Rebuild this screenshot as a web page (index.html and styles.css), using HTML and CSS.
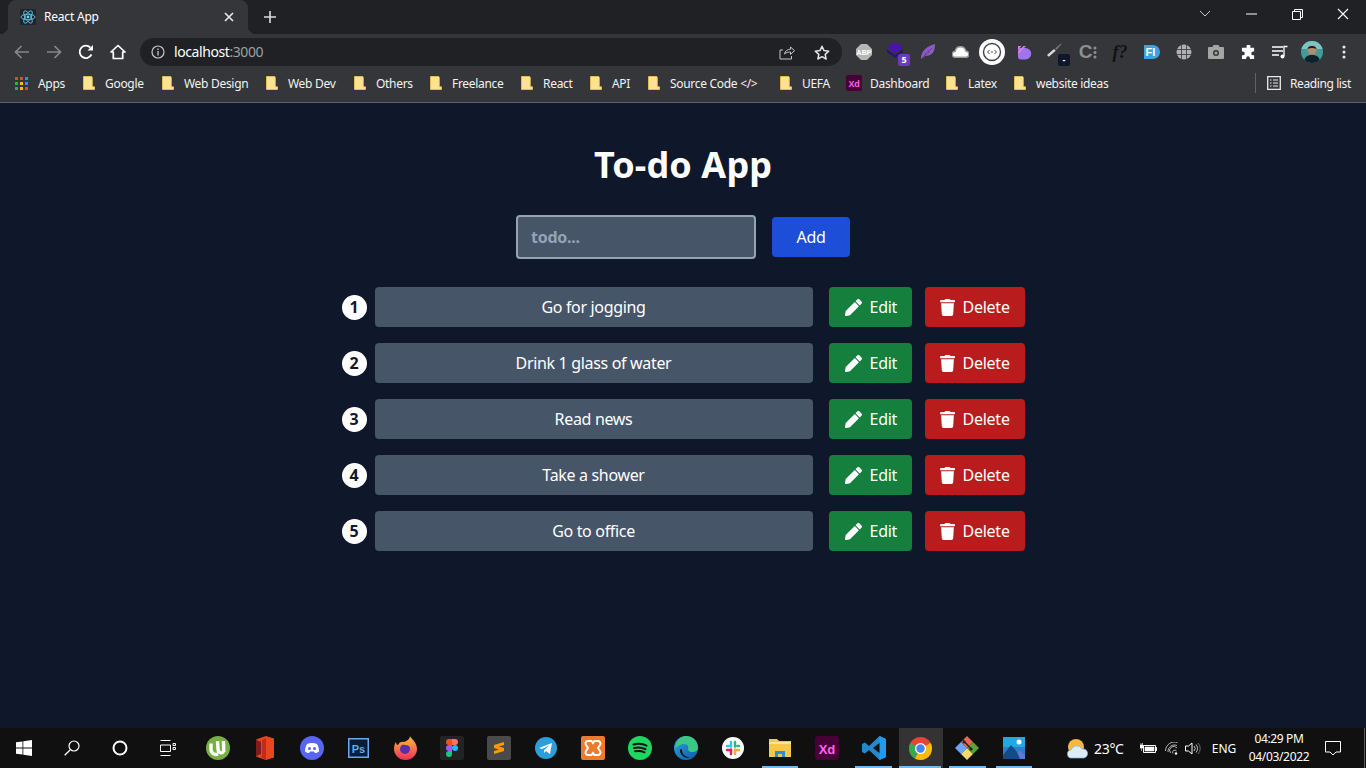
FILE: index.html
```html
<!DOCTYPE html>
<html lang="en">
<head>
<meta charset="utf-8">
<title>React App</title>
<link rel="stylesheet" href="styles.css">
</head>
<body>
<svg class="defs" width="0" height="0" aria-hidden="true">
  <symbol id="folder" viewBox="0 0 12 14"><path d="M.5.5h8.2l.6 1v9.3h2.2v2.7H.5z" fill="#fde293" stroke="#f2c94c" stroke-width=".8"/></symbol>
  <symbol id="pencil" viewBox="0 0 512 512"><path fill="#fff" d="M497.9 142.1l-46.1 46.1c-4.7 4.7-12.3 4.7-17 0l-111-111c-4.7-4.7-4.7-12.3 0-17l46.1-46.1c18.7-18.7 49.1-18.7 67.9 0l60.1 60.1c18.8 18.7 18.8 49.1 0 67.9zM284.2 99.8L21.6 362.4.4 483.9c-2.9 16.4 11.4 30.6 27.8 27.8l121.5-21.3 262.6-262.6c4.7-4.7 4.7-12.3 0-17l-111-111c-4.8-4.7-12.4-4.7-17.1 0z"/></symbol>
  <symbol id="trash" viewBox="0 0 448 512"><path fill="#fff" d="M432 32H312l-9.4-18.7A24 24 0 0 0 281.1 0H166.8a23.72 23.72 0 0 0-21.4 13.3L136 32H16A16 16 0 0 0 0 48v32a16 16 0 0 0 16 16h416a16 16 0 0 0 16-16V48a16 16 0 0 0-16-16zM53.2 467a48 48 0 0 0 47.9 45h245.8a48 48 0 0 0 47.9-45L416 128H32z"/></symbol>
</svg>

<header class="browser">
  <div class="tabstrip">
    <div class="tab">
      <svg class="favicon" width="16" height="16" viewBox="0 0 16 16"><rect width="16" height="16" rx="2" fill="#20232a"/><g fill="none" stroke="#61dafb" stroke-width=".8"><ellipse cx="8" cy="8" rx="7" ry="2.8"/><ellipse cx="8" cy="8" rx="7" ry="2.8" transform="rotate(60 8 8)"/><ellipse cx="8" cy="8" rx="7" ry="2.8" transform="rotate(120 8 8)"/></g><circle cx="8" cy="8" r="1.4" fill="#61dafb"/></svg>
      <span class="tab-title">React App</span>
      <svg class="tab-close" width="10" height="10" viewBox="0 0 10 10"><path d="M1 1l8 8M9 1l-8 8" stroke="#e8eaed" stroke-width="1.6"/></svg>
    </div>
    <svg class="newtab" width="12" height="12" viewBox="0 0 12 12"><path d="M6 0v12M0 6h12" stroke="#dadce0" stroke-width="1.6"/></svg>
    <div class="winctl">
      <span class="winbtn"><svg width="12" height="8" viewBox="0 0 12 8"><path d="M1 1l5 5 5-5" fill="none" stroke="#c4c6c9"/></svg></span>
      <span class="winbtn"><svg width="11" height="2" viewBox="0 0 11 2"><path d="M0 1h11" stroke="#fff"/></svg></span>
      <span class="winbtn"><svg width="11" height="11" viewBox="0 0 11 11"><path d="M.5 2.500h8v8h-8zM2.500 2.500v-2h8v8h-2" fill="none" stroke="#fff"/></svg></span>
      <span class="winbtn"><svg width="12" height="12" viewBox="0 0 12 12"><path d="M1 1l10 10M11 1L1 11" stroke="#fff" stroke-width="1.1"/></svg></span>
    </div>
  </div>

  <div class="toolbar">
    <span class="navbtn"><svg width="16" height="14" viewBox="0 0 16 14"><path d="M15 7H2M7.500 1L1.500 7l6 6" fill="none" stroke="#85878a" stroke-width="1.700"/></svg></span>
    <span class="navbtn"><svg width="16" height="14" viewBox="0 0 16 14"><path d="M1 7h13M8.500 1l6 6-6 6" fill="none" stroke="#85878a" stroke-width="1.700"/></svg></span>
    <span class="navbtn"><svg width="16" height="16" viewBox="0 0 16 16"><path d="M13.500 10.500A6.200 6.200 0 1 1 12.300 3.500" fill="none" stroke="#fff" stroke-width="1.800"/><path d="M9.500 6.500H15V1z" fill="#fff"/></svg></span>
    <span class="navbtn"><svg width="16" height="16" viewBox="0 0 16 16"><path d="M8 1.500L1 8h2.300v6.500h9.400V8H15z" fill="none" stroke="#fff" stroke-width="1.700" stroke-linejoin="round"/></svg></span>

    <div class="omnibox">
      <svg class="info" width="14" height="14" viewBox="0 0 14 14"><circle cx="7" cy="7" r="6" fill="none" stroke="#c4c6c9" stroke-width="1.200"/><path d="M7 6v4.500M7 3.500v1.400" stroke="#c4c6c9" stroke-width="1.300"/></svg>
      <span class="url">localhost<span class="port">:3000</span></span>
      <svg class="share" width="16" height="15" viewBox="0 0 16 15"><path d="M5.500 9c.5-3 3-4.800 6-4.800V2l4 3.700-4 3.700V7c-2.500 0-4.500.5-6 2zM12.500 11v3H1V5h3" fill="none" stroke="#c4c6c9"/></svg>
      <svg class="star" width="16" height="15" viewBox="0 0 16 15"><path d="M8 1.300l2 4.300 4.700.6-3.500 3.200.9 4.600L8 11.700 3.900 14l.9-4.600L1.300 6.200 6 5.600z" fill="none" stroke="#e3e4e6" stroke-width="1.500" stroke-linejoin="round"/></svg>
    </div>

    <div class="extensions">
      <span class="ext"><svg width="16" height="16" viewBox="0 0 16 16"><path d="M5 0h6l5 5v6l-5 5H5l-5-5V5z" fill="#b5b5b5"/><text x="8" y="10.500" class="ext-abp">ABP</text></svg></span>
      <span class="ext ext-badged"><svg class="ext-stack" width="18" height="17" viewBox="0 0 18 17"><path d="M9 0l8 5.500-8 5.500-8-5.500z" fill="#4a12b0"/><path d="M1 7.500L9 13l8-5.500V10l-8 6-8-6z" fill="#2b0f78"/></svg><span class="badge">5</span></span>
      <span class="ext"><svg width="16" height="16" viewBox="0 0 16 16"><path d="M1 15c0-6 3-12 14-15 0 8-3 12-10 12L3 14z" fill="#8e5bc4"/><path d="M1.500 14.500L12 4M5 9l1 2.500M8 6.500l1 2.500" stroke="#5c3490" stroke-width=".8" fill="none"/></svg></span>
      <span class="ext"><svg width="17" height="12" viewBox="0 0 17 12"><path d="M3.500 11.300a3 3 0 0 1-.3-6A5.400 5.400 0 0 1 13.800 5a3.100 3.100 0 0 1-.3 6.300z" fill="#fff" stroke="#9a9a9a" stroke-width="1.400"/></svg></span>
      <span class="ext"><svg width="26" height="26" viewBox="0 0 26 26"><circle cx="13" cy="13" r="13" fill="#fff"/><circle cx="13" cy="13" r="8.500" fill="none" stroke="#444" stroke-width="1.400"/><path d="M10.500 11l-2 2 2 2M15.500 11l2 2-2 2M12 13h2" fill="none" stroke="#444"/></svg></span>
      <span class="ext"><svg width="15" height="15" viewBox="0 0 15 15"><path d="M1 3h7.500a5.700 5.700 0 0 1 0 11.500H4a3 3 0 0 1-3-3z" fill="#a173f0"/><path d="M1 1h3.500L1 4.500zM1 6.500L6.500 1H9L1 9z" fill="#e27be0"/></svg></span>
      <span class="ext ext-badged"><svg class="ext-pen" width="16" height="14" viewBox="0 0 16 14"><path d="M0 12L7 6l1.800 1.800-7 6z" fill="#d8d8d8"/><path d="M8 5.500L14 .5l.6.6-5 5.700z" fill="#777"/></svg><span class="badge badge-dark">-</span></span>
      <span class="ext"><span class="ext-c">C</span><svg class="ext-c-dots" width="4" height="14" viewBox="0 0 4 14"><circle cx="2" cy="3" r="1.500" fill="#8f8f8f"/><circle cx="2" cy="7.500" r="1.500" fill="#8f8f8f"/><circle cx="2" cy="12" r="1.500" fill="#8f8f8f"/></svg></span>
      <span class="ext"><span class="ext-f">f?</span></span>
      <span class="ext"><svg width="16" height="16" viewBox="0 0 16 16"><path d="M0 1h9a7 7 0 0 1 0 14H0z" fill="#3fa2e0"/><text x="6.500" y="12" class="ext-fi">FI</text></svg></span>
      <span class="ext"><svg width="16" height="16" viewBox="0 0 16 16"><circle cx="8" cy="8" r="7.500" fill="#b0b0b0"/><path d="M5.500 .8v14.400M10.500 .8v14.400M.8 5.500h14.400M.8 10.500h14.400" stroke="#35363a" stroke-width=".8"/></svg></span>
      <span class="ext"><svg width="16" height="14" viewBox="0 0 16 14"><path d="M1 2h3.500l1-2h5l1 2H15a1 1 0 0 1 1 1v10a1 1 0 0 1-1 1H1a1 1 0 0 1-1-1V3a1 1 0 0 1 1-1z" fill="#a5a5a5"/><circle cx="8" cy="8" r="3" fill="#35363a"/><circle cx="8" cy="8" r="1.500" fill="#a5a5a5"/></svg></span>
      <span class="ext"><svg width="15" height="15" viewBox="0 0 16 16"><path d="M6 1a2 2 0 0 1 4 0v2h4v4h-1a2 2 0 0 0 0 4h1v4H9.500v-1a2 2 0 0 0-4 0v1H1v-4h1a2 2 0 0 0 0-4H1V3h5z" fill="#fff"/></svg></span>
      <span class="ext"><svg width="16" height="14" viewBox="0 0 16 14"><path d="M0 2h11M0 6h11M0 10h7" stroke="#fff" stroke-width="1.300"/><path d="M12 11V1.500h3.500" fill="none" stroke="#fff" stroke-width="1.300"/><circle cx="10.500" cy="11.500" r="2" fill="#fff"/></svg></span>
      <span class="ext"><svg width="22" height="22" viewBox="0 0 22 22"><defs><clipPath id="avatar"><circle cx="11" cy="11" r="11"/></clipPath></defs><g clip-path="url(#avatar)"><rect width="22" height="22" fill="#3f9c9a"/><rect y="0" width="22" height="8" fill="#7fc2c6"/><circle cx="11" cy="9" r="4.500" fill="#b88a6c"/><path d="M6.500 8c0-4 9-4 9 0-3-1.500-6-1.500-9 0z" fill="#1c1c1c"/><path d="M3 22c0-6 3-8 8-8s8 2 8 8z" fill="#12202a"/></g></svg></span>
      <span class="ext"><svg width="4" height="14" viewBox="0 0 4 14"><circle cx="2" cy="2" r="1.500" fill="#e8eaed"/><circle cx="2" cy="7" r="1.500" fill="#e8eaed"/><circle cx="2" cy="12" r="1.500" fill="#e8eaed"/></svg></span>
    </div>
  </div>

  <nav class="bookmarks">
    <span class="bm"><svg class="bm-icon" width="13" height="13" viewBox="0 0 13 13"><path d="M0 0h3v3H0z" fill="#ea4335"/><path d="M5 0h3v3H5z" fill="#ea4335"/><path d="M10 0h3v3h-3z" fill="#4285f4"/><path d="M0 5h3v3H0z" fill="#34a853"/><path d="M5 5h3v3H5z" fill="#fbbc05"/><path d="M10 5h3v3h-3z" fill="#4285f4"/><path d="M0 10h3v3H0z" fill="#34a853"/><path d="M5 10h3v3H5z" fill="#fbbc05"/><path d="M10 10h3v3h-3z" fill="#ea4335"/></svg>Apps</span>
    <span class="bm"><svg class="bm-icon" width="12" height="14"><use href="#folder"/></svg>Google</span>
    <span class="bm"><svg class="bm-icon" width="12" height="14"><use href="#folder"/></svg>Web Design</span>
    <span class="bm"><svg class="bm-icon" width="12" height="14"><use href="#folder"/></svg>Web Dev</span>
    <span class="bm"><svg class="bm-icon" width="12" height="14"><use href="#folder"/></svg>Others</span>
    <span class="bm"><svg class="bm-icon" width="12" height="14"><use href="#folder"/></svg>Freelance</span>
    <span class="bm"><svg class="bm-icon" width="12" height="14"><use href="#folder"/></svg>React</span>
    <span class="bm"><svg class="bm-icon" width="12" height="14"><use href="#folder"/></svg>API</span>
    <span class="bm"><svg class="bm-icon" width="12" height="14"><use href="#folder"/></svg>Source Code &lt;/&gt;</span>
    <span class="bm"><svg class="bm-icon" width="12" height="14"><use href="#folder"/></svg>UEFA</span>
    <span class="bm bm-xd"><svg class="bm-icon" width="16" height="16" viewBox="0 0 16 16"><rect width="16" height="16" rx="2" fill="#470137"/><text x="8" y="11.500" class="xd-small">Xd</text></svg>Dashboard</span>
    <span class="bm"><svg class="bm-icon" width="12" height="14"><use href="#folder"/></svg>Latex</span>
    <span class="bm"><svg class="bm-icon" width="12" height="14"><use href="#folder"/></svg>website ideas</span>
    <span class="bm-reading"><svg width="14" height="14" viewBox="0 0 14 14"><path d="M.7.7h12.600v12.600H.7z" fill="none" stroke="#e8eaed" stroke-width="1.300"/><path d="M3 4h1.500M6 4h5M3 7h1.500M6 7h5M3 10h1.500M6 10h5" stroke="#e8eaed" stroke-width="1.200"/></svg>Reading list</span>
  </nav>
</header>

<main class="app">
  <h1 class="title">To-do App</h1>
  <form class="todo-form">
    <input class="todo-input" type="text" placeholder="todo...">
    <button class="btn btn-add" type="button">Add</button>
  </form>
  <ol class="todo-list">
    <li class="todo-row">
      <span class="todo-num">1</span>
      <span class="todo-text">Go for jogging</span>
      <button class="btn btn-edit" type="button"><svg width="17" height="17"><use href="#pencil"/></svg>Edit</button>
      <button class="btn btn-delete" type="button"><svg width="15" height="17"><use href="#trash"/></svg>Delete</button>
    </li>
    <li class="todo-row">
      <span class="todo-num">2</span>
      <span class="todo-text">Drink 1 glass of water</span>
      <button class="btn btn-edit" type="button"><svg width="17" height="17"><use href="#pencil"/></svg>Edit</button>
      <button class="btn btn-delete" type="button"><svg width="15" height="17"><use href="#trash"/></svg>Delete</button>
    </li>
    <li class="todo-row">
      <span class="todo-num">3</span>
      <span class="todo-text">Read news</span>
      <button class="btn btn-edit" type="button"><svg width="17" height="17"><use href="#pencil"/></svg>Edit</button>
      <button class="btn btn-delete" type="button"><svg width="15" height="17"><use href="#trash"/></svg>Delete</button>
    </li>
    <li class="todo-row">
      <span class="todo-num">4</span>
      <span class="todo-text">Take a shower</span>
      <button class="btn btn-edit" type="button"><svg width="17" height="17"><use href="#pencil"/></svg>Edit</button>
      <button class="btn btn-delete" type="button"><svg width="15" height="17"><use href="#trash"/></svg>Delete</button>
    </li>
    <li class="todo-row">
      <span class="todo-num">5</span>
      <span class="todo-text">Go to office</span>
      <button class="btn btn-edit" type="button"><svg width="17" height="17"><use href="#pencil"/></svg>Edit</button>
      <button class="btn btn-delete" type="button"><svg width="15" height="17"><use href="#trash"/></svg>Delete</button>
    </li>
  </ol>
</main>

<footer class="taskbar">
  <div class="sys-icons">
    <span class="sys"><svg width="16" height="16" viewBox="0 0 16 16"><path d="M0 2.300l6.500-.9v6.200H0zM7.300 1.300L16 0v7.600H7.300zM0 8.400h6.500v6.200L0 13.700zM7.300 8.400H16V16l-8.700-1.200z" fill="#fff"/></svg></span>
    <span class="sys"><svg width="16" height="16" viewBox="0 0 16 16"><circle cx="10" cy="6" r="5" fill="none" stroke="#fff" stroke-width="1.200"/><path d="M6.300 9.700L.7 15.300" stroke="#fff" stroke-width="1.300"/></svg></span>
    <span class="sys"><svg width="16" height="16" viewBox="0 0 16 16"><circle cx="8" cy="8" r="6.500" fill="none" stroke="#fff" stroke-width="2"/></svg></span>
    <span class="sys"><svg width="16" height="16" viewBox="0 0 16 16"><path d="M.5 .5h10M.5 15.500h10M.5 5h10v6.500H.5zM13 3.500h2.500v2H13zM13 7.500h2.500v2H13z" fill="none" stroke="#fff"/></svg></span>
  </div>
  <div class="apps">
    <span class="app-icon"><svg width="24" height="24" viewBox="0 0 24 24"><circle cx="12" cy="12" r="12" fill="#76b041"/><path d="M5 7.500v6a5 5 0 0 0 7 4.500" fill="none" stroke="#fff" stroke-width="3.400"/><path d="M11.500 5l.6 9a3 3 0 0 0 5.400 1.500M17.500 5l.3 11" fill="none" stroke="#fff" stroke-width="3.400"/></svg></span>
    <span class="app-icon"><svg width="18" height="24" viewBox="0 0 18 24"><path d="M10 0l8 2.500v19L10 24 0 20.500v-17z" fill="#e8471c"/><path d="M10 0v24l-5-3 1-1V4L10 2z" fill="#c4291b"/><path d="M0 20.500v-17L5 6v12z" fill="#7f1c1c"/></svg></span>
    <span class="app-icon"><svg width="24" height="24" viewBox="0 0 24 24"><circle cx="12" cy="12" r="12" fill="#5865f2"/><path d="M7 8c3-1.400 7-1.400 10 0 1.500 2.500 2 5 2 7.500-1.500 1-3 1.500-4 1.500l-1-1.500h-4l-1 1.500c-1 0-2.500-.5-4-1.500 0-2.500.5-5 2-7.500z" fill="#fff"/><circle cx="9.500" cy="12.500" r="1.500" fill="#5865f2"/><circle cx="14.500" cy="12.500" r="1.500" fill="#5865f2"/></svg></span>
    <span class="app-icon"><svg width="21" height="20" viewBox="0 0 21 20"><rect x=".75" y=".75" width="19.500" height="18.500" fill="#061e3c" stroke="#6ba9e8" stroke-width="1.500"/><text x="10.500" y="14.500" class="ps">Ps</text></svg></span>
    <span class="app-icon"><svg width="23" height="24" viewBox="0 0 23 24"><defs><linearGradient id="ff" x1="0" y1="0" x2="0" y2="1"><stop offset="0" stop-color="#ffbd3a"/><stop offset="1" stop-color="#ee2f5a"/></linearGradient></defs><path d="M16 0c1 3 7 6 7 13a11.500 11 0 1 1-23 0c0-3 1-6 2-7 0 2 1 3 2 3 1-3 4-4 6-3 3-1 6-3 6-6z" fill="url(#ff)"/><circle cx="11" cy="13" r="5" fill="#5b2ea6"/><path d="M6 8c3-2 8-2 11 2-3-1-7-1-11-2z" fill="#ff9d2b"/></svg></span>
    <span class="app-icon app-tile"><svg width="12" height="18" viewBox="0 0 12 18"><path d="M6 0v6H3a3 3 0 0 1 0-6z" fill="#f24e1e"/><path d="M6 0h3a3 3 0 0 1 0 6H6z" fill="#ff7262"/><path d="M6 6v6H3a3 3 0 0 1 0-6z" fill="#a259ff"/><circle cx="9" cy="9" r="3" fill="#1abcfe"/><path d="M6 12v3a3 3 0 1 1-3-3z" fill="#0acf83"/></svg></span>
    <span class="app-icon app-tile app-tile-grey"><svg width="12" height="16" viewBox="0 0 12 16"><path d="M1 5L11 2v3L1 8zM1 5l10 3v3L1 8zM1 11l10-3v3L1 14z" fill="#ff9800"/></svg></span>
    <span class="app-icon"><svg width="22" height="22" viewBox="0 0 22 22"><circle cx="11" cy="11" r="11" fill="#2b9fd9"/><path d="M4 11l13-5-2 11-4-3-2 2v-3l6-5-8 4z" fill="#fff"/></svg></span>
    <span class="app-icon"><svg width="24" height="24" viewBox="0 0 24 24"><rect width="24" height="24" rx="2" fill="#ee7a2c"/><path d="M7 5h3.500L12 7l1.500-2H17a2.500 2.500 0 0 1 2 4l-2 3 2 3a2.500 2.500 0 0 1-2 4h-3.500L12 17l-1.500 2H7a2.500 2.500 0 0 1-2-4l2-3-2-3a2.500 2.500 0 0 1 2-4z" fill="none" stroke="#fff" stroke-width="2"/></svg></span>
    <span class="app-icon"><svg width="24" height="24" viewBox="0 0 24 24"><circle cx="12" cy="12" r="12" fill="#1ed760"/><path d="M5.500 8.500c4-1 9-1 13 1.200M6 12c3.500-.8 8-.6 11.500 1.200M7 15.300c3-.6 6.500-.5 9.500 1" fill="none" stroke="#101010" stroke-width="2" stroke-linecap="round"/></svg></span>
    <span class="app-icon"><svg width="24" height="24" viewBox="0 0 24 24"><defs><linearGradient id="edge" x1="0" y1="0" x2="1" y2="1"><stop offset="0" stop-color="#2ea4e5"/><stop offset="1" stop-color="#0c59a4"/></linearGradient></defs><circle cx="12" cy="12" r="12" fill="url(#edge)"/><path d="M12 0c6 0 12 4 12 12 0 3-3 4-6 4-3 0-4-2-4-3 1-2 0-5-4-5-3 0-7 2-9 5C2 5 6 0 12 0z" fill="#3bc884"/><path d="M8 14c0 5 5 8 9 7-6 2-10-1-11-6 0-2 1-3 2-1z" fill="#101010"/></svg></span>
    <span class="app-icon"><svg width="22" height="22" viewBox="0 0 22 22"><circle cx="11" cy="11" r="11" fill="#fff"/><g stroke-width="2.500" stroke-linecap="round"><path d="M9 5v4.500M5 9h2" stroke="#36c5f0"/><path d="M13 5v4.500M15.500 9H17" stroke="#2eb67d"/><path d="M13 17v-4.500M15 13h2" stroke="#ecb22e"/><path d="M9 17v-4.500M5 13h2" stroke="#e01e5a"/></g></svg></span>
    <span class="app-icon app-open"><svg width="22" height="18" viewBox="0 0 22 18"><path d="M0 0h8l2 2h12v16H0z" fill="#f3c94c"/><path d="M0 3h22v2H0z" fill="#fde293"/><path d="M6 18v-6h10v6h-3v-3H9v3z" fill="#2e8bd8"/></svg></span>
    <span class="app-icon"><svg width="24" height="24" viewBox="0 0 24 24"><rect width="24" height="24" rx="3" fill="#470137"/><text x="12" y="17.500" class="xd">Xd</text></svg></span>
    <span class="app-icon app-open"><svg width="24" height="24" viewBox="0 0 24 24"><path d="M17.500 0L24 3v18l-6.500 3L7 14l-4 3.500L0 16V8l3-1.500L7 10z" fill="#2489ca"/><path d="M17.500 0L24 3v18l-6.500 3z" fill="#1f9cf0"/><path d="M17.500 7v10L11 12z" fill="#101010"/></svg></span>
    <span class="app-icon app-open app-active"><svg width="23" height="23" viewBox="0 0 23 23"><circle cx="11.500" cy="11.500" r="11.500" fill="#ea4335"/><path d="M11.500 11.500L1.500 6A11.500 11.500 0 0 0 6 21.500z" fill="#34a853"/><path d="M11.500 11.500L6 21.500A11.500 11.500 0 0 0 23 11.500c0-2-.5-4-1.500-5.500z" fill="#fbbc05"/><circle cx="11.500" cy="11.500" r="5.500" fill="#fff"/><circle cx="11.500" cy="11.500" r="4.200" fill="#4285f4"/></svg></span>
    <span class="app-icon app-open"><svg width="24" height="24" viewBox="0 0 24 24"><path d="M12 12L6 6 0 12l6 6z" fill="#6aa6f5"/><path d="M12 12l6 6-6 6-6-6z" fill="#f5d76e"/><path d="M12 12l6-6 6 6-6 6z" fill="#5aa532"/><path d="M12 12L6 6l6-6 6 6z" fill="#e8675a"/><path d="M8 4l9 10" stroke="#222" stroke-width="1.500"/><circle cx="9" cy="6" r="1.500" fill="#222"/><circle cx="16" cy="13" r="1.500" fill="#222"/></svg></span>
    <span class="app-icon app-open"><svg width="22" height="22" viewBox="0 0 22 22"><rect width="22" height="22" fill="#2c7fc9"/><rect width="22" height="10" fill="#25a7e0"/><circle cx="16" cy="5" r="2.500" fill="#fff"/><path d="M0 18l8-10 6 7 3-2 5 5v4H0z" fill="#124a8c"/><path d="M14 15l3-2 5 5v4h-5z" fill="#5d79d8"/></svg></span>
  </div>
  <div class="tray">
    <span class="tray-cell"><svg width="24" height="22" viewBox="0 0 24 22"><circle cx="11" cy="10" r="8" fill="#f8b73e"/><path d="M7 21a4 4 0 0 1-1-8 6 6 0 0 1 11-1 4.500 4.500 0 0 1 2 9z" fill="#dcecf8" stroke="#7fb2dc" stroke-width=".7"/></svg></span>
    <span class="tray-cell tray-text tray-temp">23°C</span>
    <span class="tray-cell"><svg width="17" height="11" viewBox="0 0 17 11"><path d="M3.500 2.500h12v7h-12z" fill="none" stroke="#fff"/><path d="M5 4h9v4H5zM16 4.500h1v3h-1zM0 2h3v3H0zM1 0v2M2.500 0v2M1.500 5v3" fill="#fff" stroke="#fff" stroke-width=".6"/></svg></span>
    <span class="tray-cell"><svg width="13" height="13" viewBox="0 0 13 13"><g fill="none" stroke="#ddd" stroke-width=".8"><path d="M.5 9a9 9 0 0 1 12-8.500"/><path d="M3 10a6.500 6.500 0 0 1 9-6.500"/><path d="M5.500 11a4 4 0 0 1 6.500-5"/><path d="M8 11.500a2 2 0 0 1 3.500-2.500"/></g><circle cx="11" cy="11.500" r="1.200" fill="#fff"/></svg></span>
    <span class="tray-cell"><svg width="16" height="13" viewBox="0 0 16 13"><path d="M.5 4h3L7 1v11L3.500 9h-3z" fill="none" stroke="#fff"/><path d="M9 4a3.500 3.500 0 0 1 0 5M11 2.500a6 6 0 0 1 0 8" fill="none" stroke="#ddd" stroke-width=".9"/><path d="M13 1a8 8 0 0 1 0 11" fill="none" stroke="#777" stroke-width=".9"/></svg></span>
    <span class="tray-cell tray-text">ENG</span>
    <span class="clock"><span>04:29 PM</span><span>04/03/2022</span></span>
    <span class="tray-cell"><svg width="16" height="15" viewBox="0 0 16 15"><path d="M.5 .5h15v10.500h-4.500l-3 3-3-3H.5z" fill="none" stroke="#fff"/></svg></span>
    <span class="show-desktop"></span>
  </div>
</footer>
</body>
</html>
```

FILE: styles.css
```css
* { box-sizing: border-box; }
html, body { margin: 0; padding: 0; }
body {
  width: 1366px;
  height: 768px;
  overflow: hidden;
  display: flex;
  flex-direction: column;
  background: #0f172a;
  color: #fff;
  font-family: "Noto Sans", "Open Sans", sans-serif;
}
.defs { display: block; width: 0; height: 0; }

/* Browser chrome */
.browser { flex: none; font-size: 12px; color: #e8eaed; background: #35363a; border-bottom: 1px solid #5f6368; }
.tabstrip { height: 34px; display: flex; align-items: center; background: #202124; }
.tab {
  position: relative;
  align-self: flex-end;
  width: 240px;
  height: 34px;
  margin-left: 8px;
  padding: 0 12px;
  display: flex;
  align-items: center;
  background: #35363a;
  border-radius: 8px 8px 0 0;
}
.tab::before, .tab::after {
  content: "";
  position: absolute;
  bottom: 0;
  width: 8px;
  height: 8px;
}
.tab::before { left: -8px; background: radial-gradient(circle at 0 0, #202124 8px, #35363a 8.5px); }
.tab::after { right: -8px; background: radial-gradient(circle at 100% 0, #202124 8px, #35363a 8.5px); }
.favicon { flex: none; }
.tab-title { margin: 0 0 2px 8px; flex: 1; color: #fff; white-space: nowrap; letter-spacing: -.2px; }
.tab-close { flex: none; margin-right: 2px; }
.newtab { flex: none; margin-left: 16px; }
.winctl { margin-left: auto; display: flex; align-self: flex-start; }
.winbtn { width: 46px; height: 28px; display: flex; align-items: center; justify-content: center; }

.toolbar { height: 36px; padding-left: 6px; display: flex; align-items: center; }
.navbtn { flex: none; width: 32px; display: flex; justify-content: center; align-items: center; }
.omnibox {
  flex: none;
  width: 702px;
  height: 28px;
  margin: 0 6px;
  padding: 0 10px 0 11px;
  display: flex;
  align-items: center;
  background: #202124;
  border-radius: 14px;
}
.info { flex: none; }
.url { margin: 0 0 2px 9px; flex: 1; font-size: 14px; color: #fff; white-space: nowrap; letter-spacing: -.42px; }
.port { color: #9aa0a6; }
.share { flex: none; margin-right: 2px; }
.star { flex: none; margin-left: 17px; margin-right: 2px; }
.extensions { flex: none; display: flex; align-items: center; }
.ext { position: relative; flex: none; width: 32px; height: 28px; display: flex; align-items: center; justify-content: center; }
.ext-stack { margin: 0 2px 3px 0; }
.ext-pen { margin: 0 3px 4px 0; }
.badge {
  position: absolute;
  right: 2px;
  bottom: 0;
  width: 12px;
  height: 12px;
  border-radius: 2px;
  background: #6a3bc0;
  color: #fff;
  font-size: 9px;
  font-weight: 700;
  line-height: 12px;
  text-align: center;
}
.badge-dark { background: #0f172a; }
.ext-abp { font: 700 7px "Liberation Sans", sans-serif; fill: #fff; text-anchor: middle; }
.ext-fi { font: 700 11px "Liberation Sans", sans-serif; fill: #fff; text-anchor: middle; }
.ext-c { font: 700 19px/24px "Liberation Sans", sans-serif; color: #8f8f8f; }
.ext-c-dots { flex: none; margin-left: 1px; }
.ext-f { font: italic 700 18px "Liberation Serif", serif; color: #111; }

.bookmarks {
  height: 32px;
  padding: 0 0 6px 15px;
  display: grid;
  grid-template-columns: 68px 79px 104px 88px 76px 91px 69px 58px 132px 66px 100px 68px 241px 1fr;
  align-items: center;
}
.bm { display: flex; align-items: center; gap: 10px; white-space: nowrap; color: #f1f3f4; letter-spacing: -.3px; }
.bm-icon { flex: none; }
.bm-xd { gap: 8px; }
.bm-reading { display: flex; align-items: center; gap: 9px; height: 20px; padding-left: 11px; border-left: 1px solid #5f6368; white-space: nowrap; letter-spacing: -.4px; color: #f1f3f4; }
.xd-small { font: 700 9px "Liberation Sans", sans-serif; fill: #ff61f6; text-anchor: middle; }

/* App */
.app { flex: 1; min-height: 0; padding-top: 42px; display: flex; flex-direction: column; align-items: center; }
.title { margin: 0 0 30px; font-size: 36px; line-height: 40px; font-weight: 700; letter-spacing: .1px; }
.todo-form { display: flex; align-items: center; gap: 16px; }
.todo-input {
  width: 240px;
  height: 44px;
  padding: 0 13px;
  background: #475569;
  border: 2px solid #94a3b8;
  border-radius: 4px;
  color: #fff;
  font: 700 16px "Noto Sans", sans-serif;
  letter-spacing: -.25px;
  outline: none;
}
.todo-input::placeholder { color: #94a3b8; opacity: 1; }
.btn {
  height: 40px;
  border: 0;
  border-radius: 4px;
  color: #fff;
  font: 400 16px "Noto Sans", sans-serif;
  letter-spacing: -.25px;
  display: flex;
  align-items: center;
}
.btn-add { width: 78px; background: #1d4ed8; justify-content: center; }
.btn-edit { width: 83px; margin-left: 16px; padding: 0 0 0 16px; gap: 8px; background: #15803d; }
.btn-delete { width: 100px; margin-left: 13px; padding: 0 0 0 15px; gap: 8px; background: #b91c1c; }
.todo-list { margin: 28px 0 0; padding: 0; list-style: none; display: flex; flex-direction: column; gap: 16px; }
.todo-row { width: 683px; display: flex; align-items: center; }
.todo-num {
  flex: none;
  width: 25px;
  height: 25px;
  margin-right: 8px;
  border-radius: 50%;
  background: #fff;
  color: #111827;
  font-weight: 700;
  font-size: 16px;
  line-height: 25px;
  text-align: center;
}
.todo-text {
  flex: none;
  width: 438px;
  height: 40px;
  line-height: 40px;
  background: #475569;
  border-radius: 4px;
  font-size: 16px;
  letter-spacing: -.33px;
  text-align: center;
}

/* Taskbar */
.taskbar { flex: none; height: 40px; display: flex; background: #101010; color: #fff; font-size: 12px; }
.sys-icons { flex: none; display: flex; width: 194px; }
.sys { flex: none; width: 48px; display: flex; align-items: center; justify-content: center; }
.apps { flex: none; display: flex; margin-left: 1px; }
.app-icon { position: relative; flex: none; width: 46.800px; display: flex; align-items: center; justify-content: center; }
.app-tile::before {
  content: "";
  position: absolute;
  left: 11px;
  top: 8px;
  width: 24px;
  height: 24px;
  border-radius: 2px;
  background: #232323;
}
.app-tile svg { position: relative; }
.app-tile-grey::before { background: #4a4a4a; }
.app-open::after {
  content: "";
  position: absolute;
  left: 5px;
  right: 5px;
  bottom: 0;
  height: 2px;
  background: #76b9ed;
}
.app-active::before {
  content: "";
  position: absolute;
  left: 2px;
  right: 1px;
  top: 0;
  bottom: 0;
  background: #333;
}
.app-active svg { position: relative; }
.app-active::after { left: 2px; right: 3px; }
.ps { font: 700 11px "Liberation Sans", sans-serif; fill: #6ba9e8; text-anchor: middle; }
.xd { font: 700 13px "Liberation Sans", sans-serif; fill: #ff61f6; text-anchor: middle; }
.tray {
  margin-left: auto;
  display: grid;
  grid-template-columns: 34px 42px 24px 22px 22px 40px 70px 38px 14px;
  align-items: center;
}
.tray-cell { display: flex; align-items: center; justify-content: center; }
.tray-text { white-space: nowrap; }
.tray-temp { font-size: 14px; justify-content: flex-start; letter-spacing: -.3px; }
.clock { display: flex; flex-direction: column; align-items: center; line-height: 18px; white-space: nowrap; letter-spacing: -.35px; }
.show-desktop { justify-self: end; width: 1px; height: 40px; margin-right: 1px; background: #5a5a5a; }
```
